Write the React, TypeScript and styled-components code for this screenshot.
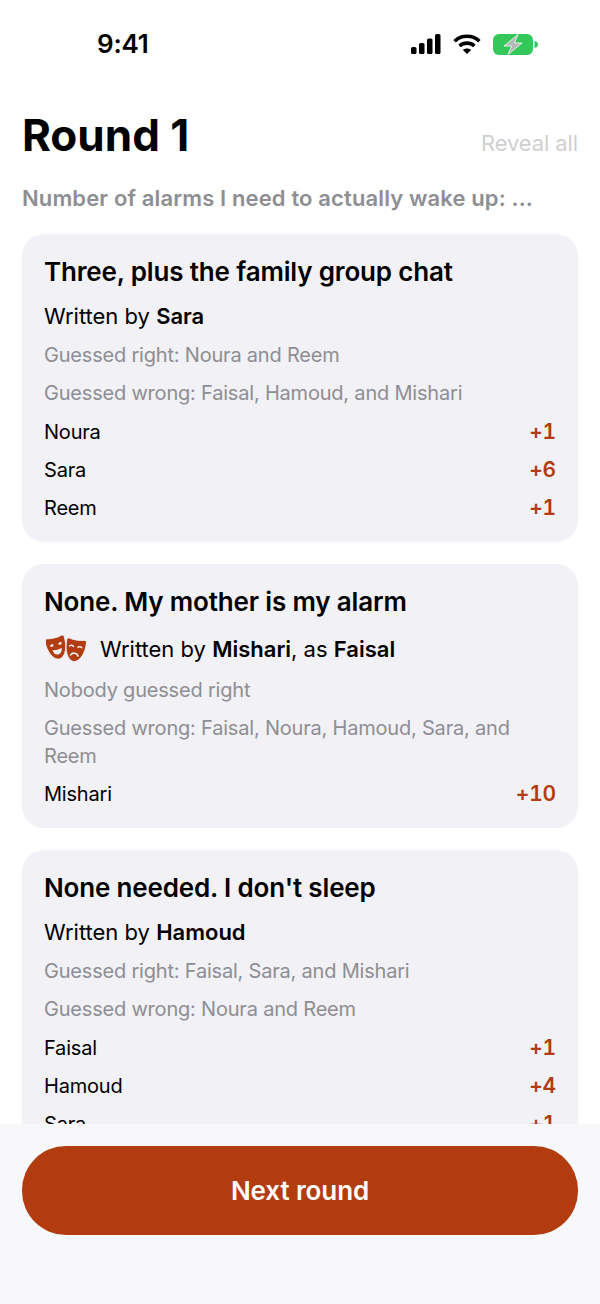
import React from "react";
import styled, { createGlobalStyle } from "styled-components";

const accent = "#b23c0f";
const cardBg = "#f1f1f6";

type Score = { name: string; points: string };
type Answer = {
  title: string;
  author: string;
  as?: string;
  right: string;
  wrong: string;
  scores: Score[];
};

const answers: Answer[] = [
  {
    title: "Three, plus the family group chat",
    author: "Sara",
    right: "Guessed right: Noura and Reem",
    wrong: "Guessed wrong: Faisal, Hamoud, and Mishari",
    scores: [
      { name: "Noura", points: "+1" },
      { name: "Sara", points: "+6" },
      { name: "Reem", points: "+1" },
    ],
  },
  {
    title: "None. My mother is my alarm",
    author: "Mishari",
    as: "Faisal",
    right: "Nobody guessed right",
    wrong: "Guessed wrong: Faisal, Noura, Hamoud, Sara, and Reem",
    scores: [{ name: "Mishari", points: "+10" }],
  },
  {
    title: "None needed. I don't sleep",
    author: "Hamoud",
    right: "Guessed right: Faisal, Sara, and Mishari",
    wrong: "Guessed wrong: Noura and Reem",
    scores: [
      { name: "Faisal", points: "+1" },
      { name: "Hamoud", points: "+4" },
      { name: "Sara", points: "+1" },
    ],
  },
];

const maskShape =
  "M0.8 4.6 Q0.8 2.6 2.8 2.9 C8 4.2 13.5 4.2 18.7 2.9 Q20.7 2.6 20.7 4.6 C21.2 15 17.6 24.8 10.8 25.6 C4 24.8 0.3 15 0.8 4.6 Z";

function CellSignal() {
  return (
    <svg width="30" height="20" viewBox="0 0 30 20" fill="#000">
      <rect x="0" y="13" width="5.5" height="7" rx="1.6" />
      <rect x="8" y="9" width="5.5" height="11" rx="1.6" />
      <rect x="16" y="4.5" width="5.5" height="15.5" rx="1.6" />
      <rect x="24" y="0" width="5.5" height="20" rx="1.6" />
    </svg>
  );
}

function Wifi() {
  return (
    <svg width="28" height="20" viewBox="0 0 28 20" fill="none" stroke="#000" strokeWidth="3.6">
      <path d="M1.6 7.2 C8.5 0.6 19.5 0.6 26.4 7.2" />
      <path d="M6.6 12 C10.8 8.2 17.2 8.2 21.4 12" />
      <path d="M14 20 L9.9 15.9 C12.2 13.9 15.8 13.9 18.1 15.9 Z" fill="#000" stroke="none" />
    </svg>
  );
}

function Battery() {
  return (
    <svg width="45" height="21" viewBox="0 0 45 21">
      <rect x="0" y="0" width="40" height="21" rx="6" fill="#34c759" />
      <path d="M41.5 7 C43.8 7.5 45 8.8 45 10.5 C45 12.2 43.8 13.5 41.5 14 Z" fill="#34c759" />
      <path
        d="M25 0.5 L11 12 H18.5 L15 20.5 L29 9 H21.5 Z"
        fill="#b4b8b4"
        stroke="#fff"
        strokeWidth="0.8"
        strokeLinejoin="round"
      />
    </svg>
  );
}

function Masks() {
  return (
    <svg width="40" height="30" viewBox="0 0 40 30">
      {/* sad mask */}
      <g transform="translate(18.5 2) rotate(9 10 14)">
        <path d={maskShape} fill={accent} stroke={cardBg} strokeWidth="0.8" />
        <path d="M4.6 10.6 C5.6 9.6 7.4 9.6 8.4 10.6" fill="none" stroke={cardBg} strokeWidth="1.5" strokeLinecap="round" />
        <path d="M13 10.6 C14 9.6 15.8 9.6 16.8 10.6" fill="none" stroke={cardBg} strokeWidth="1.5" strokeLinecap="round" />
        <path d="M7 19.4 C8.4 16.4 13 16.4 14.4 19.4" fill="none" stroke={cardBg} strokeWidth="1.7" strokeLinecap="round" />
      </g>
      {/* happy mask */}
      <g transform="translate(0 0) rotate(-14 10 14)">
        <path d={maskShape} fill={accent} stroke={cardBg} strokeWidth="0.8" />
        <ellipse cx="6.6" cy="10.6" rx="1.8" ry="1.3" fill={cardBg} />
        <ellipse cx="15" cy="10.6" rx="1.8" ry="1.3" fill={cardBg} />
        <path
          d="M6 15.2 C8.5 16.4 13 16.4 15.5 15.2 C15 19.2 13 20.8 10.8 20.8 C8.6 20.8 6.5 19.2 6 15.2 Z"
          fill={cardBg}
        />
      </g>
    </svg>
  );
}

export default function App() {
  return (
    <>
      <GlobalStyles />
      <Screen>
        <StatusBar>
          <Time>9:41</Time>
          <StatusIcons>
            <CellSignal />
            <Wifi />
            <Battery />
          </StatusIcons>
        </StatusBar>

        <Header>
          <Title>Round 1</Title>
          <RevealAll>Reveal all</RevealAll>
        </Header>
        <Prompt>Number of alarms I need to actually wake up: ...</Prompt>

        <CardList>
          {answers.map((answer) => (
            <Card key={answer.title}>
              <AnswerTitle>{answer.title}</AnswerTitle>
              <Author $hasIcon={!!answer.as}>
                {answer.as && <Masks />}
                <span>
                  Written by <strong>{answer.author}</strong>
                  {answer.as && (
                    <>
                      , as <strong>{answer.as}</strong>
                    </>
                  )}
                </span>
              </Author>
              <GuessList $tight={!!answer.as}>
                <Guess>{answer.right}</Guess>
                <Guess>{answer.wrong}</Guess>
              </GuessList>
              {answer.scores.map((score) => (
                <ScoreRow key={score.name}>
                  <span>{score.name}</span>
                  <Points>{score.points}</Points>
                </ScoreRow>
              ))}
            </Card>
          ))}
        </CardList>

        <Footer>
          <NextButton>Next round</NextButton>
        </Footer>
      </Screen>
    </>
  );
}

const GlobalStyles = createGlobalStyle`
  html, body {
    margin: 0;
    padding: 0;
    background: #fff;
  }
  * {
    box-sizing: border-box;
  }
`;

const Screen = styled.div`
  position: relative;
  width: 600px;
  height: 1304px;
  overflow: hidden;
  background: #fff;
  font-family: Inter, "Liberation Sans", sans-serif;
  color: #000;
`;

const StatusBar = styled.div`
  display: flex;
  justify-content: space-between;
  align-items: center;
  height: 32px;
  margin-top: 28px;
  padding: 0 62px 0 97px;
`;

const Time = styled.div`
  font-size: 26px;
  font-weight: 600;
  line-height: 32px;
  letter-spacing: -0.2px;
`;

const StatusIcons = styled.div`
  display: flex;
  align-items: center;
  gap: 12px;
`;

const Header = styled.div`
  display: flex;
  justify-content: space-between;
  align-items: flex-end;
  margin-top: 46px;
  padding: 0 22px;
`;

const Title = styled.h1`
  margin: 0;
  font-size: 44px;
  font-weight: 700;
  line-height: 58px;
`;

const RevealAll = styled.div`
  font-size: 22px;
  line-height: 28px;
  letter-spacing: -0.1px;
  color: #cfcfd2;
  margin-bottom: 7px;
`;

const Prompt = styled.div`
  margin-top: 20px;
  padding: 0 22px;
  font-size: 22px;
  font-weight: 600;
  line-height: 28px;
  letter-spacing: 0.13px;
  color: #8e8e93;
`;

const CardList = styled.div`
  display: flex;
  flex-direction: column;
  gap: 22px;
  margin-top: 22px;
  padding: 0 22px;
`;

const Card = styled.div`
  display: flex;
  flex-direction: column;
  gap: 10px;
  padding: 22px 22px 20px;
  border-radius: 22px;
  background: ${cardBg};
`;

const AnswerTitle = styled.div`
  font-size: 26px;
  font-weight: 600;
  line-height: 32px;
  letter-spacing: -0.16px;
  margin-bottom: 4px;
`;

const Author = styled.div<{ $hasIcon: boolean }>`
  display: flex;
  align-items: center;
  gap: 14px;
  height: ${({ $hasIcon }) => ($hasIcon ? "33px" : "28px")};
  padding-left: ${({ $hasIcon }) => ($hasIcon ? "2px" : "0")};
  font-size: 22px;
  line-height: 28px;

  strong {
    font-weight: 600;
  }
`;

const GuessList = styled.div<{ $tight: boolean }>`
  display: flex;
  flex-direction: column;
  gap: 10px;
  margin: 1px 0 ${({ $tight }) => ($tight ? "0" : "1px")};
`;

const Guess = styled.div`
  font-size: 20px;
  line-height: 28px;
  letter-spacing: -0.2px;
  color: #8e8e93;
`;

const ScoreRow = styled.div`
  display: flex;
  justify-content: space-between;
  font-size: 20px;
  line-height: 28px;
  letter-spacing: -0.2px;
`;

const Points = styled.span`
  font-size: 21px;
  font-weight: 600;
  font-variant-numeric: tabular-nums;
  color: ${accent};
`;

const Footer = styled.div`
  position: absolute;
  left: 0;
  right: 0;
  bottom: 0;
  height: 180px;
  padding: 22px 22px 0;
  background: #f8f8fa;
`;

const NextButton = styled.button`
  display: block;
  width: 100%;
  height: 89px;
  border: none;
  border-radius: 44px;
  background: ${accent};
  color: #fff;
  font-family: inherit;
  font-size: 26px;
  font-weight: 600;
  letter-spacing: -0.1px;
`;
